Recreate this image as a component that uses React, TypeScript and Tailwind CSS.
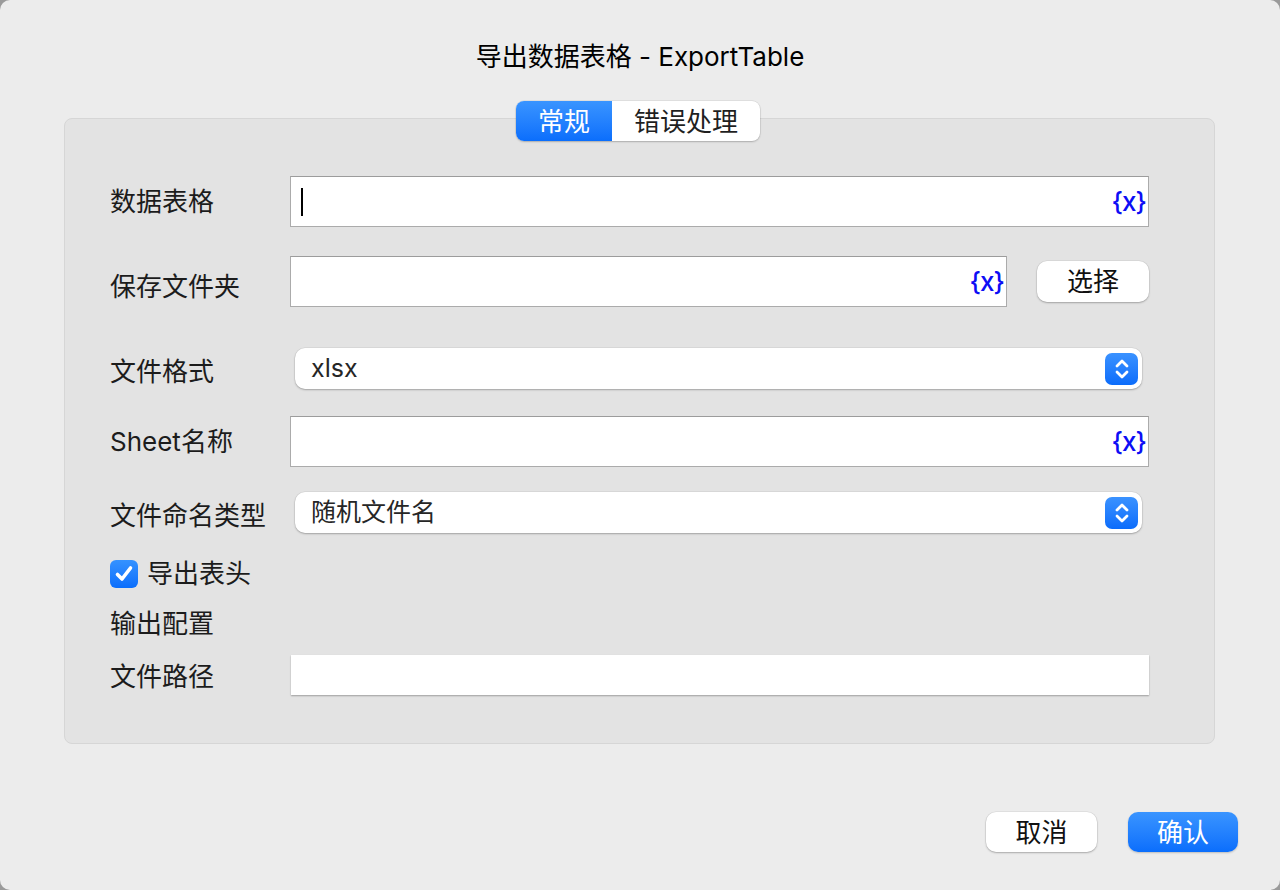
import React from 'react';

const font = { fontFamily: 'Inter, "Noto Sans CJK SC", sans-serif' };

const VarTag = () => (
    <span className="text-[26px] font-medium leading-none text-[#0d0df5] pr-[2px] tracking-[-1px]">{'{x}'}</span>
);

const TextField: React.FC<{ width?: string; caret?: boolean }> = ({ width = 'w-[859px]', caret }) => (
    <div className={`${width} h-[51px] bg-white border border-[#ababab] border-t-[#9c9c9c] flex items-center justify-between`}>
        <div className="pl-[10px]">{caret && <div className="w-[2px] h-[28px] bg-black" />}</div>
        <VarTag />
    </div>
);

const Stepper = () => (
    <div className="w-[33px] h-[32px] rounded-[7px] bg-gradient-to-b from-[#3a92ff] to-[#0a6cfb] flex items-center justify-center">
        <svg width="20" height="26" viewBox="0 0 20 26" fill="none" stroke="white" strokeWidth="2.8" strokeLinecap="round" strokeLinejoin="round">
            <path d="M5 10 L10 5 L15 10" />
            <path d="M5 16 L10 21 L15 16" />
        </svg>
    </div>
);

const Select: React.FC<{ value: string }> = ({ value }) => (
    <div className="ml-[5px] w-[847px] h-[41px] bg-white rounded-[10px] shadow-[0_1px_2px_rgba(0,0,0,0.25),0_0_0_0.5px_rgba(0,0,0,0.08)] flex items-center justify-between pl-[16px] pr-[4px]">
        <span className="text-[25px] text-[#262626]">{value}</span>
        <Stepper />
    </div>
);

const Label: React.FC<{ children: React.ReactNode }> = ({ children }) => (
    <div className="w-[180px] text-[26px] text-[#1c1c1c] leading-none">{children}</div>
);

export default function App() {
    return (
        <div style={font} className="w-[1280px] h-[890px] bg-[#9a9a9a]">
            <div className="w-full h-full bg-[#ececec] rounded-[10px] flex flex-col">
                <div className="h-[101px] pt-[40px] text-center text-[26px] leading-[34px] text-black">
                    导出数据表格 - ExportTable
                </div>

                <div className="relative mt-[17px] ml-[64px] mr-[65px] h-[626px] bg-[#e3e3e3] border border-[#d6d6d6] rounded-[8px] pl-[45px] pt-[57px]">
                    <div className="absolute top-[-18px] left-[451px] flex h-[40px] rounded-[8px] bg-white shadow-[0_1px_2px_rgba(0,0,0,0.2),0_0_0_0.5px_rgba(0,0,0,0.1)] overflow-hidden">
                        <div className="w-[96px] bg-gradient-to-b from-[#3994ff] to-[#0a6efc] text-white text-[26px] flex items-center justify-center">常规</div>
                        <div className="w-[148px] text-[#1f1f1f] text-[26px] flex items-center justify-center">错误处理</div>
                    </div>

                    <div className="flex items-center h-[51px]">
                        <Label>数据表格</Label>
                        <TextField caret />
                    </div>

                    <div className="flex items-center h-[51px] mt-[29px]">
                        <Label><span className="relative top-[5px]">保存文件夹</span></Label>
                        <TextField width="w-[717px]" />
                        <button className="ml-[30px] w-[112px] h-[41px] rounded-[10px] bg-white shadow-[0_1px_2px_rgba(0,0,0,0.25),0_0_0_0.5px_rgba(0,0,0,0.08)] text-[26px] text-[#111] flex items-center justify-center">
                            选择
                        </button>
                    </div>

                    <div className="flex items-center h-[41px] mt-[41px]">
                        <Label><span className="relative top-[3px]">文件格式</span></Label>
                        <Select value="xlsx" />
                    </div>

                    <div className="flex items-center h-[51px] mt-[27px]">
                        <Label>Sheet名称</Label>
                        <TextField />
                    </div>

                    <div className="flex items-center h-[41px] mt-[25px]">
                        <Label><span className="relative top-[3px]">文件命名类型</span></Label>
                        <Select value="随机文件名" />
                    </div>

                    <div className="flex items-center h-[28px] mt-[27px] gap-[9px]">
                        <div className="w-[28px] h-[28px] rounded-[6px] bg-gradient-to-b from-[#3592ff] to-[#0a6efc] flex items-center justify-center">
                            <svg width="22" height="22" viewBox="0 0 22 22" fill="none" stroke="white" strokeWidth="3.6" strokeLinecap="round" strokeLinejoin="round">
                                <path d="M4.5 11.5 L9 16 L17.5 5" />
                            </svg>
                        </div>
                        <span className="text-[26px] text-[#1c1c1c] leading-none">导出表头</span>
                    </div>

                    <div className="h-[28px] mt-[21px] flex items-center text-[26px] text-[#1c1c1c]">输出配置</div>

                    <div className="flex items-center h-[40px] mt-[18px]">
                        <Label><span className="relative top-[2px]">文件路径</span></Label>
                        <div className="ml-[1px] w-[858px] h-[40px] bg-white shadow-[0_1px_1.5px_rgba(0,0,0,0.3)]" />
                    </div>
                </div>

                <div className="flex justify-end gap-[31px] mt-[68px] mr-[42px]">
                    <button className="w-[111px] h-[40px] rounded-[10px] bg-white shadow-[0_1px_2px_rgba(0,0,0,0.25),0_0_0_0.5px_rgba(0,0,0,0.08)] text-[26px] text-[#111] flex items-center justify-center">
                        取消
                    </button>
                    <button className="w-[110px] h-[40px] rounded-[10px] bg-gradient-to-b from-[#3994ff] to-[#0a6efc] shadow-[0_1px_2px_rgba(0,0,0,0.2)] text-[26px] text-white flex items-center justify-center">
                        确认
                    </button>
                </div>
            </div>
        </div>
    );
}
